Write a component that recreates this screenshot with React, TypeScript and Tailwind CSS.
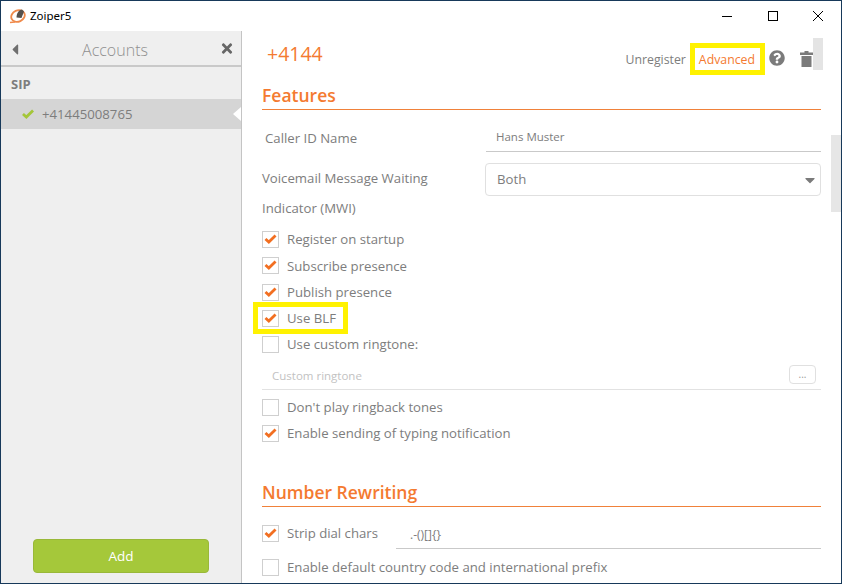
import { FaQuestionCircle, FaTimes, FaCaretLeft, FaCaretDown } from "react-icons/fa";

function Tick({ className }: { className: string }) {
  return (
    <svg viewBox="0 0 14 12" className={className}>
      <path d="M1.5 5.4 L5.2 8.8 L12.5 1.6" fill="none" stroke="currentColor" strokeWidth="3" />
    </svg>
  );
}

function CheckRow({ label, checked, className }: { label: string; checked?: boolean; className: string }) {
  return (
    <div className={`flex items-center ${className}`}>
      <span className="mb-[2px] flex h-[17px] w-[17px] shrink-0 items-center justify-center border border-[#cfcfcf] bg-white">
        {checked && <Tick className="h-[11px] w-[13px] text-[#f26f21]" />}
      </span>
      <span className="ml-2 text-[13.2px] leading-none text-[#7d7d7d]">{label}</span>
    </div>
  );
}

function SectionTitle({ title, className }: { title: string; className: string }) {
  return (
    <div className={`flex h-[27px] items-center border-b border-[#f0813a] pb-px text-[17.5px] font-semibold text-[#f47a30] ${className}`}>
      {title}
    </div>
  );
}

function Logo() {
  return (
    <svg viewBox="0 0 17 16" className="h-[16px] w-[17px]">
      <ellipse cx="9" cy="8" rx="7" ry="5.6" transform="rotate(-25 9 8)" fill="none" stroke="#ef8a4b" strokeWidth="1.8" />
      <path d="M7.5 9.5 C7.5 5.5 10 1.5 13 1.5 L15 3.5 L12.5 10 Z" fill="#55504c" />
      <path d="M1 14.5 L6 14" stroke="#ef8a4b" strokeWidth="1.4" />
    </svg>
  );
}

function TrashIcon() {
  return (
    <svg viewBox="0 0 13 16" className="mb-[2px] ml-[15px] mr-[8px] h-[16px] w-[13px] text-[#7b7b7b]">
      <path d="M4.5 0 H8.5 V1.5 H13 V4 H0 V1.5 H4.5 Z M1.5 5 H11.5 V16 H1.5 Z" fill="currentColor" />
    </svg>
  );
}

export default function App() {
  return (
    <div className="flex h-[584px] w-[842px] flex-col overflow-hidden bg-[#17395a] px-px pt-px pb-px font-['Open_Sans','Noto_Sans',sans-serif]">
      {/* title bar */}
      <div className="flex h-[30px] shrink-0 items-center bg-white">
        <div className="ml-[8px] flex items-center gap-[4px]">
          <Logo />
          <span className="font-['Noto_Sans',sans-serif] text-[11.5px] text-black">Zoiper5</span>
        </div>
        <div className="ml-auto flex items-center">
          <span className="flex w-[46px] justify-center">
            <span className="h-px w-[10px] bg-black" />
          </span>
          <span className="flex w-[45px] justify-center">
            <span className="h-[10px] w-[10px] border border-black" />
          </span>
          <span className="flex w-[46px] justify-center">
            <svg viewBox="0 0 10 10" className="h-[10px] w-[10px]">
              <path d="M0 0 L10 10 M10 0 L0 10" stroke="#000" strokeWidth="1" />
            </svg>
          </span>
        </div>
      </div>

      <div className="flex min-h-0 flex-1">
        {/* accounts sidebar */}
        <aside className="flex w-[241px] shrink-0 flex-col border-r border-[#c4c4c4] bg-[#efefef]">
          <div className="flex h-[36px] shrink-0 items-center border-b-2 border-[#c9c9c9] pl-[9px] pr-[7px] pt-[3px]">
            <FaCaretLeft className="h-[17px] w-[10px] text-[#6f6f6f]" />
            <span className="flex-1 pr-[10px] text-center text-[16px] font-light text-[#8f8f8f]">Accounts</span>
            <FaTimes className="mb-[2px] h-[15px] w-[14px] text-[#666666]" />
          </div>
          <div className="flex h-[32px] shrink-0 items-center pl-[10px] pt-[3px] text-[13px] font-bold text-[#7d7d7d]">SIP</div>
          <div className="relative flex h-[30px] shrink-0 items-center bg-[#d5d5d5] pl-[20px] pt-px text-[13.2px] text-[#7d7d7d]">
            <Tick className="mr-[7px] h-[11px] w-[14px] text-[#a4c639]" />
            +41445008765
            <span className="absolute right-0 top-[8px] h-0 w-0 border-y-[7px] border-r-[8px] border-y-transparent border-r-white" />
          </div>
          <div className="mt-auto mb-[10px] flex h-[34px] w-[176px] self-center items-center justify-center rounded-[4px] border border-[#99b839] bg-[#a5c83a] text-[13.5px] font-medium text-white">
            Add
          </div>
        </aside>

        {/* account settings */}
        <main className="relative min-w-0 flex-1 overflow-hidden bg-white pl-[20px] pr-[20px]">
          {/* scrollbars */}
          <span className="absolute right-[18px] top-[7px] h-[32px] w-[10px] bg-[#e4e4e4]" />
          <span className="absolute right-0 top-[104px] h-[77px] w-[10px] bg-[#e6e6e6]" />

          <div className="relative flex h-[46px] items-center">
            <span className="ml-[5px] text-[19.5px] font-medium text-[#f47a30]">+4144</span>
            <div className="ml-auto mt-[19px] flex h-[20px] items-center self-start">
              <span className="text-[12.3px] text-[#7d7d7d]">Unregister</span>
              <span className="ml-[13px] text-[12.3px] text-[#f47a30]">Advanced</span>
              <FaQuestionCircle className="mb-[4px] ml-[14px] h-[16px] w-[16px] text-[#7b7b7b]" />
              <TrashIcon />
            </div>
          </div>

          <SectionTitle title="Features" className="mt-[6px]" />

          <div className="mt-[9px] flex h-[33px] items-center">
            <span className="w-[224px] pl-[3px] pt-[6px] text-[13.2px] text-[#7d7d7d]">Caller ID Name</span>
            <span className="flex h-full flex-1 items-center border-b border-[#c9c9c9] pl-[10px] pt-[4px] text-[11.5px] text-[#7d7d7d]">
              Hans Muster
            </span>
          </div>

          <div className="mt-[11px] flex">
            <span className="w-[223px] text-[13.2px] leading-[30px] text-[#7d7d7d]">
              Voicemail Message Waiting
              <br />
              Indicator (MWI)
            </span>
            <span className="flex h-[33px] flex-1 items-center justify-between rounded-[4px] border border-[#e0e0e0] pl-[11px] pr-[3px] text-[13.2px] text-[#7d7d7d]">
              Both
              <FaCaretDown className="h-[16px] w-[14px] text-[#7b7b7b]" />
            </span>
          </div>

          <CheckRow label="Register on startup" checked className="mt-[4px] h-[26px]" />
          <CheckRow label="Subscribe presence" checked className="h-[27px]" />
          <CheckRow label="Publish presence" checked className="h-[26px]" />
          <CheckRow label="Use BLF" checked className="h-[26px]" />
          <CheckRow label="Use custom ringtone:" className="h-[26px]" />

          <div className="mt-[2px] flex h-[30px] items-center border-b border-[#e2e2e2] pl-[10px] pr-[5px] pt-[2px]">
            <span className="text-[11.5px] text-[#c2c2c2]">Custom ringtone</span>
            <span className="mb-[2px] ml-auto flex h-[19px] w-[27px] items-center justify-center rounded-[4px] border border-[#e0e0e0] text-[10px] text-[#9a9a9a]">
              ...
            </span>
          </div>

          <CheckRow label="Don't play ringback tones" className="mt-[5px] h-[26px]" />
          <CheckRow label="Enable sending of typing notification" checked className="h-[26px]" />

          <SectionTitle title="Number Rewriting" className="mt-[33px]" />

          <div className="mt-[14px] flex h-[28px] items-start">
            <CheckRow label="Strip dial chars" checked className="h-[26px] w-[134px]" />
            <span className="flex h-[28px] flex-1 items-center border-b border-[#c9c9c9] pl-[14px] text-[12px] text-[#7d7d7d]">
              .-()[]{"{}"}
            </span>
          </div>

          <CheckRow label="Enable default country code and international prefix" className="mt-[6px] h-[26px]" />

          {/* yellow highlights drawn over the settings */}
          <span className="absolute left-[448px] top-[12px] h-[32px] w-[75px] border-[5px] border-[#fff200]" />
          <span className="absolute left-[11px] top-[271px] h-[32px] w-[95px] border-[5px] border-[#fff200]" />
        </main>
      </div>
    </div>
  );
}
